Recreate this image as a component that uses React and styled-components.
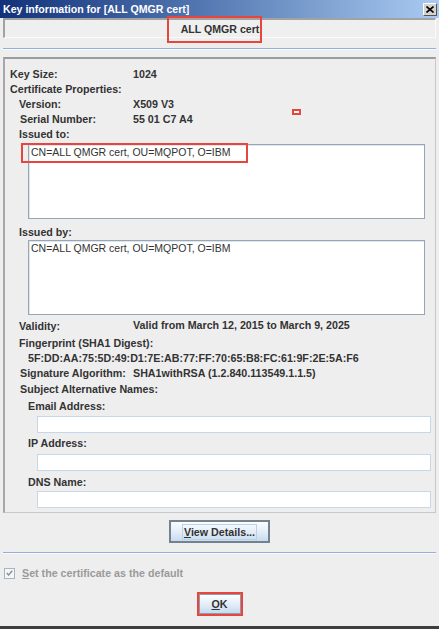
import styled, { createGlobalStyle } from "styled-components"

const GlobalStyle = createGlobalStyle`
  html, body { margin: 0; padding: 0; background: #eeeeee; }
  body { font-family: "Liberation Sans", Arial, sans-serif; }
`

const Window = styled.div`
  width: 439px;
  height: 629px;
  display: flex;
  flex-direction: column;
  background: #eeeeee;
  color: #333;
  overflow: hidden;
`
const TitleBar = styled.div`
  height: 18px;
  flex: none;
  display: flex;
  align-items: center;
  justify-content: space-between;
  padding: 0 2px 0 3px;
  background: linear-gradient(to right, #12317a 0%, #4a6eaa 40%, #a9cbf1 100%);
`
const TitleText = styled.span`
  color: #fff;
  font-weight: bold;
  font-size: 10.6px;
`
const CloseBtn = styled.div`
  width: 14px;
  height: 13px;
  box-sizing: border-box;
  display: flex;
  align-items: center;
  justify-content: center;
  background: #d6d3ce;
  border: 1px solid;
  border-color: #fff #555 #555 #fff;
`
const Body = styled.div`
  flex: 1;
  display: flex;
  flex-direction: column;
  padding: 0 3px 0 3px;
`
const NameField = styled.div`
  height: 20px;
  box-sizing: border-box;
  display: flex;
  align-items: center;
  justify-content: center;
  border-style: solid;
  border-width: 2px 1px 1px 2px;
  border-color: #a2a2a2 #fafafa #fafafa #a2a2a2;
  background: #efefef;
  font-weight: bold;
  font-size: 10.6px;
`
const Marked = styled.span`
  position: relative;
  &::after {
    content: "";
    position: absolute;
    left: ${p => p.$l}px;
    right: ${p => p.$r}px;
    top: ${p => p.$t}px;
    bottom: ${p => p.$b}px;
    border: 2px solid #e8463c;
  }
`
const Separator = styled.div`
  height: 1px;
  margin-top: ${p => p.$top}px;
  background: #93b0da;
  box-shadow: 0 1px 0 #fbfbfb;
`
const Panel = styled.div`
  position: relative;
  margin-top: 8px;
  height: 456px;
  box-sizing: border-box;
  border-style: solid;
  border-width: 2px 1px 1px 2px;
  border-color: #9c9c9c #c8c8c8 #c8c8c8 #a8a8a8;
  padding: 7px 0 0 5px;
`
const Row = styled.div`
  display: flex;
  align-items: center;
  height: ${p => p.$h || 15}px;
  margin-top: ${p => p.$mt || 0}px;
  padding-left: ${p => p.$indent || 0}px;
  font-size: 10.7px;
  font-weight: bold;
  white-space: nowrap;
`
const Label = styled.span`
  width: ${p => 123 - (p.$indent || 0)}px;
  flex: none;
`
const Value = styled.span`
  margin-top: ${p => p.$up || 0}px;
`
const TextBox = styled.div`
  position: relative;
  margin: ${p => p.$mt}px 0 0 18px;
  width: 397px;
  height: 75px;
  box-sizing: border-box;
  background: #fff;
  border: 1px solid #97a6b7;
  box-shadow: inset 1px 1px 0 #dfe5ec;
  padding: 1px 2px;
  font-size: 10.5px;
  line-height: 12px;
  color: #333;
`
const BoxMark = styled.div`
  position: absolute;
  left: -8px;
  top: -2px;
  width: 227px;
  height: 20px;
  box-sizing: border-box;
  border: 2px solid #e8463c;
`
const Input = styled.div`
  margin: ${p => p.$mt}px 0 0 27px;
  width: 394px;
  height: 17px;
  box-sizing: border-box;
  background: #fff;
  border: 1px solid #c7d7ea;
`
const Dot = styled.div`
  position: absolute;
  left: 287px;
  top: 50px;
  width: 9px;
  height: 6px;
  box-sizing: border-box;
  border: 2px solid #e8463c;
  background: #fff;
`
const ButtonRow = styled.div`
  display: flex;
  justify-content: center;
  margin-top: ${p => p.$mt}px;
`
const Button = styled.div`
  box-sizing: border-box;
  width: ${p => p.$w}px;
  height: ${p => p.$h}px;
  display: flex;
  align-items: center;
  justify-content: center;
  border: ${p => (p.$default ? "2px solid #73828f" : "1px solid #8d9db0")};
  background: linear-gradient(to bottom, #fbfdff 0%, #e4eef8 50%, #c8dbef 100%);
  font-size: 10.7px;
  font-weight: bold;
  color: #333;
  u { text-decoration: underline; }
`
const FocusRing = styled.span`
  padding: 1px 1px;
  border: 1px solid #bcd1e8;
  line-height: 12px;
`
const RedFrame = styled.div`
  border: 2px solid #e8463c;
`
const CheckRow = styled.div`
  display: flex;
  align-items: center;
  gap: 7px;
  margin-top: 13px;
  padding-left: 1px;
  height: 14px;
  font-size: 10.7px;
  font-weight: bold;
  color: #9a9a9a;
`
const CheckBox = styled.div`
  width: 11px;
  height: 11px;
  box-sizing: border-box;
  border: 1px solid #a7b4c2;
  background: #f4f6f8;
  display: flex;
  align-items: center;
  justify-content: center;
`
const Bottom = styled.div`
  margin-top: auto;
  height: 3px;
  background: #3d3d3d;
`

export default function App() {
  return (
    <Window>
      <GlobalStyle />
      <TitleBar>
        <TitleText>Key information for [ALL QMGR cert]</TitleText>
        <CloseBtn>
          <svg width="8" height="7" viewBox="0 0 8 7">
            <path d="M0.5 0.5 L7.5 6.5 M7.5 0.5 L0.5 6.5" stroke="#000" strokeWidth="1.6" />
          </svg>
        </CloseBtn>
      </TitleBar>
      <Body>
        <NameField>
          <Marked $l={-14} $r={-3} $t={-7} $b={-8}>ALL QMGR cert</Marked>
        </NameField>
        <Separator $top={10} />
        <Panel>
          <Dot />
          <Row><Label>Key Size:</Label><Value>1024</Value></Row>
          <Row><Label>Certificate Properties:</Label></Row>
          <Row $indent={9}><Label $indent={9}>Version:</Label><Value>X509 V3</Value></Row>
          <Row $indent={10}><Label $indent={10}>Serial Number:</Label><Value>55 01 C7 A4</Value></Row>
          <Row $indent={9}><Label $indent={9}>Issued to:</Label></Row>
          <TextBox $mt={3}>
            <BoxMark />
            CN=ALL QMGR cert, OU=MQPOT, O=IBM
          </TextBox>
          <Row $indent={9} $mt={5}><Label $indent={9}>Issued by:</Label></Row>
          <TextBox $mt={1}>CN=ALL QMGR cert, OU=MQPOT, O=IBM</TextBox>
          <Row $indent={9} $mt={3}>
            <Label $indent={9}>Validity:</Label>
            <Value $up={-2}>Valid from March 12, 2015 to March 9, 2025</Value>
          </Row>
          <Row $indent={9} $h={17} $mt={1}><Label $indent={9}>Fingerprint (SHA1 Digest):</Label></Row>
          <Row $indent={18} $h={14}>5F:DD:AA:75:5D:49:D1:7E:AB:77:FF:70:65:B8:FC:61:9F:2E:5A:F6</Row>
          <Row $indent={10}>
            <Label $indent={10}>Signature Algorithm:</Label>
            <Value>SHA1withRSA (1.2.840.113549.1.1.5)</Value>
          </Row>
          <Row $indent={10} $h={17}><Label $indent={10}>Subject Alternative Names:</Label></Row>
          <Row $indent={18} $h={18}>Email Address:</Row>
          <Input $mt={1} />
          <Row $indent={18} $h={20}>IP Address:</Row>
          <Input $mt={1} />
          <Row $indent={18} $h={19} $mt={1}>DNS Name:</Row>
          <Input $mt={0} />
        </Panel>
        <ButtonRow $mt={7}>
          <Button $w={101} $h={23} $default>
            <FocusRing><u>V</u>iew Details...</FocusRing>
          </Button>
        </ButtonRow>
        <Separator $top={9} />
        <CheckRow>
          <CheckBox>
            <svg width="7" height="6" viewBox="0 0 7 6">
              <path d="M0.8 3 L2.6 5 L6.3 0.8" stroke="#8a8f96" strokeWidth="1.4" fill="none" />
            </svg>
          </CheckBox>
          <span><u>S</u>et the certificate as the default</span>
        </CheckRow>
        <ButtonRow $mt={12}>
          <RedFrame>
            <Button $w={42} $h={20}><u>O</u>K</Button>
          </RedFrame>
        </ButtonRow>
      </Body>
      <Bottom />
    </Window>
  )
}
